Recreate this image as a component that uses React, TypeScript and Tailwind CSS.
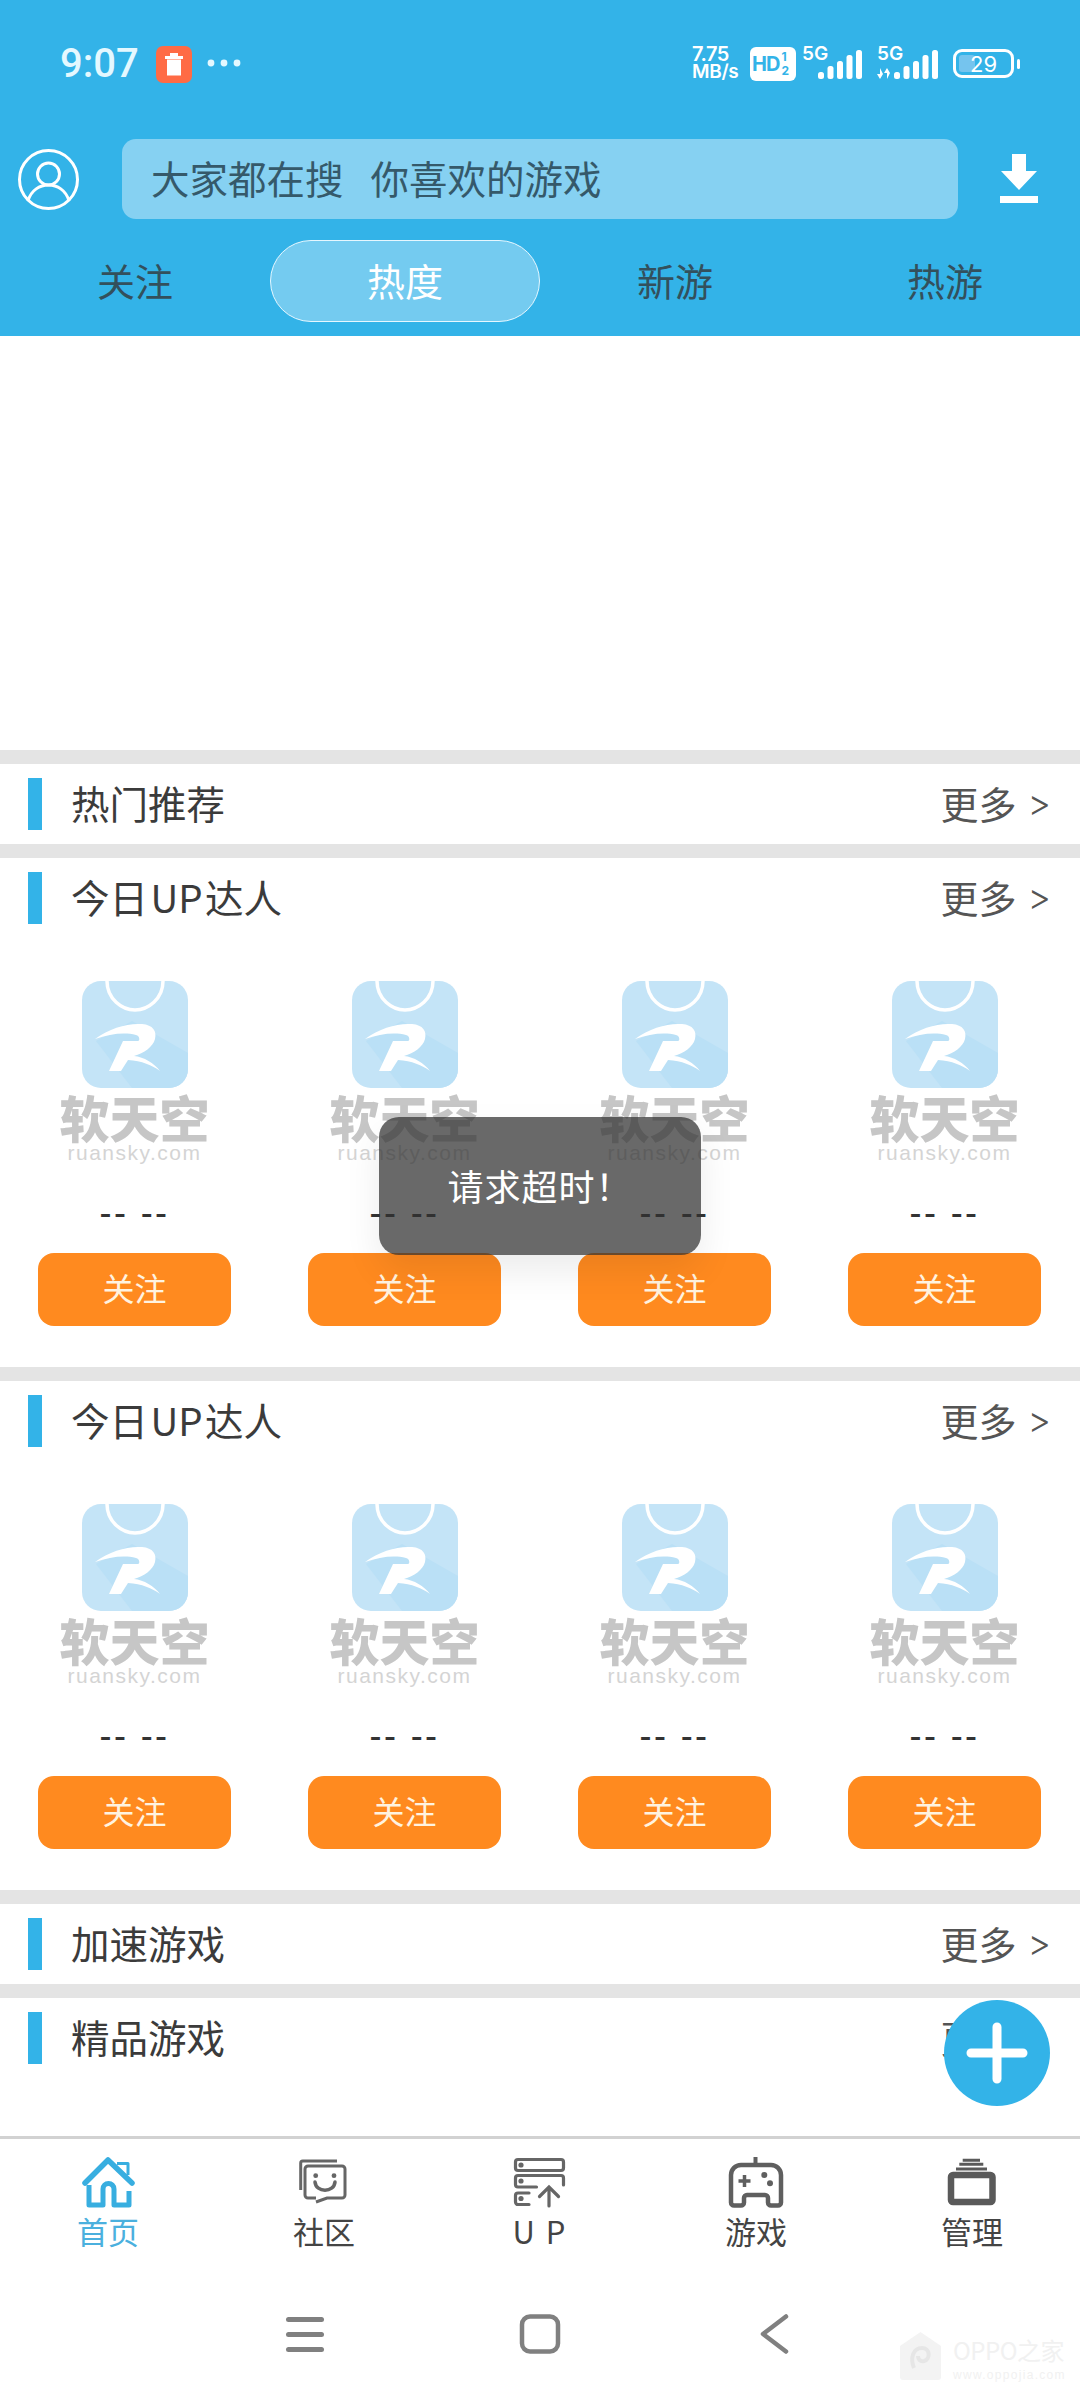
const Bars = () => (
  <svg width="44" height="29" viewBox="0 0 44 29" fill="#fff">
    <rect x="0" y="22" width="6" height="7" rx="2.5" />
    <rect x="9.5" y="16" width="6" height="13" rx="2.5" />
    <rect x="19" y="11" width="6" height="18" rx="2.5" />
    <rect x="28.5" y="5" width="6" height="24" rx="2.5" />
    <rect x="38" y="0" width="6" height="29" rx="2.5" />
  </svg>
);

const StatusBar = () => (
  <div className="h-[139px] pt-[44px] pl-[60px] pr-[60px] flex items-start text-white">
    <span className="font-['Roboto',sans-serif] font-medium text-[40px] leading-[40px] text-[#e4f8ff] w-[96px]">9:07</span>
    <div className="w-[36px] h-[37px] rounded-[7px] bg-[#FF6B45] flex items-center justify-center mt-[2px]">
      <svg width="20" height="24" viewBox="0 0 20 24" fill="#fff">
        <rect x="6" y="0" width="8" height="3" />
        <rect x="1" y="3" width="18" height="3" />
        <rect x="3" y="6.5" width="14" height="16" />
      </svg>
    </div>
    <svg className="ml-[14px] mt-[14px]" width="36" height="10" viewBox="0 0 36 10" fill="#e4f8ff">
      <circle cx="5" cy="5" r="3.4" />
      <circle cx="18" cy="5" r="3.4" />
      <circle cx="31" cy="5" r="3.4" />
    </svg>
    <div className="flex-1" />
    <div className="flex items-start font-['Inter',sans-serif] font-semibold">
      <div className="w-[58px] flex flex-col mt-[2px]">
        <span className="text-[20px] leading-[17px] tracking-[-0.5px]">7.75</span>
        <span className="text-[19px] leading-[18px] tracking-[-0.3px]">MB/s</span>
      </div>
      <div className="w-[46px] h-[34px] mt-[3px] rounded-[6px] bg-white text-[#33B3E8] flex items-center pl-[2px] font-bold">
        <span className="text-[20px] tracking-[-1px]">HD</span>
        <span className="flex flex-col text-[12px] leading-[14px] ml-[2px]">
          <span>1</span>
          <span>2</span>
        </span>
      </div>
      <div className="relative w-[66px] h-[34px] ml-[6px] mt-[3px]">
        <span className="absolute left-0 -top-[2px] text-[19px] leading-[18px]">5G</span>
        <div className="absolute left-[16px] top-[3px]">
          <Bars />
        </div>
      </div>
      <div className="relative w-[74px] h-[34px] ml-[9px] mt-[3px]">
        <span className="absolute left-0 -top-[2px] text-[19px] leading-[18px]">5G</span>
        <svg className="absolute left-0 top-[21px]" width="14" height="11" viewBox="0 0 14 11" fill="#fff">
          <path d="M3 0v6H0l3 5 3-5zM10 11V5H7l3-5 3 5z" />
        </svg>
        <div className="absolute left-[17px] top-[3px]">
          <Bars />
        </div>
      </div>
      <div className="ml-[2px] mt-[5px] flex items-center">
        <div className="w-[61px] h-[29px] rounded-[9px] border-[3px] border-white relative flex items-center justify-center overflow-hidden">
          <div className="absolute left-[3px] top-[3px] bottom-[3px] w-[16px] bg-[#75C4EE] rounded-[3px]" />
          <span className="relative font-['Inter',sans-serif] font-normal text-[22px] leading-[22px]">29</span>
        </div>
        <div className="w-[3px] h-[10px] ml-[3px] bg-white rounded-[2px]" />
      </div>
    </div>
  </div>
);

const SearchRow = () => (
  <div className="h-[80px] flex items-center">
    <svg className="ml-[18px]" width="61" height="61" viewBox="0 0 61 61" fill="none" stroke="#fff" strokeWidth="3">
      <circle cx="30.5" cy="30.5" r="29" />
      <circle cx="30.5" cy="25" r="11" />
      <path d="M10 52C13 41 22 36 30.5 36S48 41 51 52" />
    </svg>
    <div className="ml-[43px] w-[836px] h-[80px] rounded-[14px] bg-[#86D1F2] flex items-center pl-[29px] pb-[4px] text-[38.5px] text-[#35596A] leading-none">
      <span>大家都在搜</span>
      <span className="ml-[27px]">你喜欢的游戏</span>
    </div>
    <svg className="ml-[41px]" width="40" height="50" viewBox="0 0 40 50" fill="#fff">
      <path d="M13 0H27V17H38L20 36 2 17H13Z" />
      <rect x="1" y="42" width="38" height="7" />
    </svg>
  </div>
);

const Tabs = () => (
  <div className="grid grid-cols-4 mt-[21px] h-[82px] mb-[14px]">
    <div className="flex items-center justify-center pb-[4px] text-[38px] text-[#33505C]">关注</div>
    <div className="flex items-center justify-center pb-[4px] text-[38px] text-white rounded-full bg-[#74CBF0] border border-[#e6f7ff]">热度</div>
    <div className="flex items-center justify-center pb-[4px] text-[38px] text-[#33505C]">新游</div>
    <div className="flex items-center justify-center pb-[4px] text-[38px] text-[#33505C]">热游</div>
  </div>
);

const Band = () => <div className="h-[14px] bg-[#E4E4E4]" />;

const SectionHeader = ({ title }: { title: string }) => (
  <div className="h-[80px] shrink-0 flex items-center pl-[28px] pr-[29px] bg-white">
    <div className="w-[14px] h-[52px] bg-[#33B3E8]" />
    <span className="ml-[29px] mb-[3px] text-[38.5px] leading-none text-[#3b3b3b]">{title}</span>
    <span className="ml-auto mb-[3px] text-[38px] leading-none text-[#555] flex items-center">
      更多
      <span className="ml-[11px] font-['Inter',sans-serif] font-light text-[36px] leading-none">&gt;</span>
    </span>
  </div>
);

const Logo = () => (
  <svg width="106" height="107" viewBox="0 0 106 107">
    <rect width="106" height="107" rx="19" fill="#C4E4F7" />
    <path d="M14 60L50 40 106 72V88A19 19 0 0 1 87 107H50Z" fill="#BAE0F6" />
    <path d="M25 0C25 18 40 29 53 29S81 18 81 0" fill="none" stroke="#fff" strokeWidth="3.5" />
    <path d="M13 58C28 47 45 42 60 43C71 44 75 50 73 58C71 66 62 72 52 75C62 76 72 82 78 90C70 84 60 80 46 79L39 90H27L41 60L56 60C58 60 58 55 54 54C42 51 28 53 13 58Z" fill="#fff" />
  </svg>
);

const UpCard = () => (
  <div className="flex flex-col items-center pr-[1px]">
    <Logo />
    <div className="mt-[5px] text-[50px] leading-[46px] font-black text-[#C6C6C6] whitespace-nowrap">软天空</div>
    <div className="mt-[3px] h-[22px] font-['Liberation_Sans',sans-serif] text-[21px] leading-[22px] tracking-[1.5px] text-[#D4D4D4]">ruansky.com</div>
    <div className="mt-[29px] h-[40px] font-['Liberation_Sans',sans-serif] text-[36px] leading-[40px] tracking-[2.4px] text-[#333] whitespace-pre">-- --</div>
    <div className="mt-[20px] w-[193px] h-[73px] rounded-[16px] bg-[#FF8A1F] text-[#FFF3E0] text-[32px] pb-[5px] flex items-center justify-center">关注</div>
  </div>
);

const UpSection = () => (
  <div className="bg-white">
    <SectionHeader title={"今日\u200AUP\u200A达人"} />
    <div className="grid grid-cols-4 pt-[43px] pb-[41px]">
      <UpCard />
      <UpCard />
      <UpCard />
      <UpCard />
    </div>
  </div>
);

const NavItem = ({ label, active, wide, children }: { label: string; active?: boolean; wide?: boolean; children: React.ReactNode }) => (
  <div className="flex flex-col items-center">
    <div className="h-[54px]">{children}</div>
    <span className={(active ? "text-[#4BB0DE] " : "text-[#444] ") + (wide ? "tracking-[2px] " : "") + "mt-[2px] text-[31px] leading-[40px]"}>{label}</span>
  </div>
);

const HomeIcon = () => (
  <svg width="60" height="54" viewBox="0 0 60 54" fill="none" stroke="#38AEE0" strokeLinejoin="round">
    <path d="M7 28L30 5 54 28" strokeWidth="5.5" strokeLinecap="round" />
    <path d="M39 8.5H50V20" strokeWidth="3" />
    <path d="M11 30V50H25V34a5.5 5.5 0 0 1 11 0V50H51V36" strokeWidth="5" />
  </svg>
);

const CommunityIcon = () => (
  <svg width="60" height="54" viewBox="0 0 60 54" fill="none" stroke="#666" strokeWidth="3">
    <path d="M6.7 35V8a2 2 0 0 1 2-2H43" />
    <path d="M14 11H48a3 3 0 0 1 3 3V40a3 3 0 0 1-3 3H33L22 47M22 43H14a3 3 0 0 1-3-3V14a3 3 0 0 1 3-3" />
    <circle cx="21.7" cy="20.7" r="2.4" fill="#666" stroke="none" />
    <circle cx="40" cy="20.7" r="2.4" fill="#666" stroke="none" />
    <path d="M21 27C22 38 40 38 41 27" strokeWidth="3.5" strokeLinecap="round" />
  </svg>
);

const UpIcon = () => (
  <svg width="60" height="54" viewBox="0 0 60 54" fill="none" stroke="#666" strokeWidth="3.2" strokeLinecap="round">
    <rect x="5.5" y="4.5" width="48" height="11" rx="2.5" />
    <circle cx="11" cy="10" r="2.6" fill="#666" stroke="none" />
    <path d="M53.5 30V23a2.5 2.5 0 0 0-2.5-2.5H8A2.5 2.5 0 0 0 5.5 23v6.5A2.5 2.5 0 0 0 8 32H26.5" />
    <circle cx="11" cy="26" r="2.6" fill="#666" stroke="none" />
    <path d="M19 38H8a2.5 2.5 0 0 0-2.5 2.5v6.5A2.5 2.5 0 0 0 8 49.5H19" />
    <circle cx="11" cy="43.5" r="2.6" fill="#666" stroke="none" />
    <path d="M39 51V32M29.5 41.5L39 32l9.5 9.5" />
  </svg>
);

const GameIcon = () => (
  <svg width="62" height="54" viewBox="0 0 62 54" fill="none" stroke="#5f5f5f" strokeWidth="4.5">
    <path d="M30.5 2V10" strokeWidth="4" />
    <path d="M16 10H46a10 10 0 0 1 10 10V47.5a3 3 0 0 1-3 3H46a3 3 0 0 1-3-3V43a3 3 0 0 0-3-3H22a3 3 0 0 0-3 3V47.5a3 3 0 0 1-3 3H9A3 3 0 0 1 6 47.5V20A10 10 0 0 1 16 10Z" />
    <path d="M19.5 20V32M13.5 26H25.5" strokeWidth="3.5" />
    <circle cx="39.3" cy="20" r="3" fill="#5f5f5f" stroke="none" />
    <circle cx="45" cy="28.3" r="3" fill="#5f5f5f" stroke="none" />
  </svg>
);

const ManageIcon = () => (
  <svg width="60" height="54" viewBox="0 0 60 54" fill="none" stroke="#5a5a5a">
    <rect x="9" y="20" width="41.5" height="27" rx="2" strokeWidth="6.5" />
    <path d="M14 14H45M17.3 9.3H41.3M20.7 5.3H38" strokeWidth="3" />
  </svg>
);

const SystemBar = () => (
  <div className="h-[110px] flex items-start justify-center gap-[175px] pt-[26px]">
    <svg width="60" height="40" viewBox="0 0 60 40" fill="#808080">
      <rect x="11" y="3" width="38" height="5" rx="2.5" />
      <rect x="11" y="18" width="38" height="5" rx="2.5" />
      <rect x="11" y="33" width="38" height="5" rx="2.5" />
    </svg>
    <svg width="60" height="40" viewBox="0 0 60 40" fill="none" stroke="#808080" strokeWidth="4.5">
      <rect x="12" y="2.5" width="36" height="35" rx="8" />
    </svg>
    <svg width="60" height="40" viewBox="0 0 60 40" fill="none" stroke="#808080" strokeWidth="4.5" strokeLinecap="round" strokeLinejoin="round">
      <path d="M41 2.5L18 20l23 17.5" />
    </svg>
  </div>
);

export default function App() {
  return (
    <div className="relative w-[1080px] h-[2400px] overflow-hidden bg-white flex flex-col font-['Noto_Sans_CJK_SC',sans-serif]">
      <div className="bg-[#33B3E8]">
        <StatusBar />
        <SearchRow />
        <Tabs />
      </div>
      <div className="h-[414px] bg-white" />
      <Band />
      <SectionHeader title="热门推荐" />
      <Band />
      <UpSection />
      <Band />
      <UpSection />
      <Band />
      <SectionHeader title="加速游戏" />
      <Band />
      <div className="h-[138px] bg-white">
        <SectionHeader title="精品游戏" />
      </div>
      <div className="h-[3px] bg-[#D2D2D2]" />
      <div className="grid grid-cols-5 h-[149px] pt-[16px]">
        <NavItem label="首页" active><HomeIcon /></NavItem>
        <NavItem label="社区"><CommunityIcon /></NavItem>
        <NavItem label="U P" wide><UpIcon /></NavItem>
        <NavItem label="游戏"><GameIcon /></NavItem>
        <NavItem label="管理"><ManageIcon /></NavItem>
      </div>
      <SystemBar />

      <div className="absolute left-[379px] top-[1117px] w-[322px] h-[138px] rounded-[20px] bg-[rgba(50,50,50,0.73)] shadow-[0_16px_36px_rgba(0,0,0,0.08)] flex items-center justify-center pb-[2px] text-white text-[36px] tracking-[1px]">
        请求超时！
      </div>

      <div className="absolute left-[944px] top-[2000px] w-[106px] h-[106px] rounded-full bg-[#33B3E8] flex items-center justify-center">
        <svg width="62" height="62" viewBox="0 0 62 62" stroke="#fff" strokeWidth="9" strokeLinecap="round">
          <path d="M31 5V57M5 31H57" />
        </svg>
      </div>

      <div className="absolute left-[900px] top-[2332px] flex items-start text-[#F1F1F1]">
        <svg width="41" height="48" viewBox="0 0 41 48">
          <path d="M20.5 0L41 14V45a3 3 0 0 1-3 3H3a3 3 0 0 1-3-3V14Z" fill="#F3F3F3" />
          <path d="M14 36C10 26 13 16 22 16C30 16 31 27 24 29C20 30 18 27 18 24" fill="none" stroke="#E6E6E6" strokeWidth="4" />
        </svg>
        <div className="ml-[12px] flex flex-col">
          <span className="text-[24px] leading-[36px] whitespace-nowrap tracking-[-0.5px]">OPPO之家</span>
          <span className="font-['Liberation_Sans',sans-serif] text-[12px] leading-[14px] tracking-[1.3px] whitespace-nowrap">www.oppojia.com</span>
        </div>
      </div>
    </div>
  );
}
